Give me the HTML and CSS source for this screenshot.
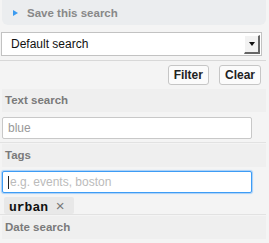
FILE: index.html
```html
<!DOCTYPE html>
<html lang="en">
<head>
    <meta charset="UTF-8">
    <title>Search filters</title>
    <link rel="stylesheet" href="styles.css">
</head>
<body>
    <div class="sidebar">
        <!-- Save search toggle -->
        <div class="save-box">
            <span class="arrow"></span>
            <span class="save-label">Save this search</span>
        </div>

        <!-- Saved search picker -->
        <div class="select">
            <span>Default search</span>
            <span class="select-btn"><span class="select-caret"></span></span>
        </div>

        <div class="rule"></div>

        <div class="actions">
            <button class="btn">Filter</button>
            <button class="btn">Clear</button>
        </div>

        <!-- Text search -->
        <div class="section first">
            <div class="section-head">Text search</div>
            <div class="field">blue</div>
        </div>

        <!-- Tags -->
        <div class="section">
            <div class="section-head">Tags</div>
            <div class="field focused"><span class="cursor"></span>e.g. events, boston</div>
            <div class="tags">
                <span class="tag">urban <span class="tag-x">&times;</span></span>
            </div>
        </div>

        <div class="section">
            <div class="section-head">Date search</div>
        </div>
    </div>
</body>
</html>
```

FILE: styles.css
```css
body {
    margin: 0;
    background: #f3f3f3;
    font-family: "Liberation Sans", Arial, sans-serif;
    font-size: 12px;
    color: #333;
}

.sidebar {
    width: 269px;
    height: 243px;
    overflow: hidden;
    background: #f4f4f4;
}

/* top toggle box */
.save-box {
    height: 25px;
    margin: 0 3px 0 2px;
    background: #ebedef;
    border-radius: 0 0 6px 6px;
    display: flex;
    align-items: center;
    padding-left: 11px;
    box-sizing: border-box;
}

.arrow {
    width: 0;
    height: 0;
    border-top: 3.5px solid transparent;
    border-bottom: 3.5px solid transparent;
    border-left: 5px solid #3b9bf0;
    margin-right: 9px;
}

.save-label {
    font-weight: bold;
    font-size: 11.5px;
    color: #888;
}

/* select */
.select {
    margin: 7px 0 0 1px;
    width: 261px;
    height: 24px;
    box-sizing: border-box;
    background: #fff;
    border: 1px solid #c2c2c2;
    display: flex;
    align-items: center;
    justify-content: space-between;
    padding-left: 9px;
    font-size: 12px;
    color: #111;
}

.select-btn {
    width: 13px;
    height: 16px;
    margin-right: 1px;
    background: #f2f2f2;
    border-top: 1px solid #fff;
    border-left: 1px solid #fff;
    border-right: 2px solid #666;
    border-bottom: 2px solid #666;
    display: flex;
    align-items: center;
    justify-content: center;
}

.select-caret {
    width: 0;
    height: 0;
    border-left: 3.5px solid transparent;
    border-right: 3.5px solid transparent;
    border-top: 4px solid #111;
}

.rule {
    margin-top: 4px;
    width: 266px;
    border-top: 1px solid #d8d8d8;
}

.actions {
    display: flex;
    justify-content: flex-end;
    gap: 10px;
    padding: 4px 8px 2px 0;
}

.btn {
    font-family: "Liberation Sans", Arial, sans-serif;
    font-weight: bold;
    font-size: 12px;
    color: #222;
    background: #fbfbfb;
    border: 1px solid #c6c6c6;
    border-radius: 3px;
    height: 20px;
    padding: 0 5px;
}

/* filter sections */
.section {
    border-top: 1px solid #e2e2e2;
    width: 266px;
}

.section.first {
    border-top-color: transparent;
}

.section-head {
    margin: 1px 0 0 2px;
    height: 23px;
    line-height: 23px;
    padding-left: 3px;
    background: #efefef;
    font-weight: bold;
    font-size: 11.5px;
    color: #7a7a7a;
}

.field {
    margin: 5px 0 3px 2px;
    width: 250px;
    height: 22px;
    box-sizing: border-box;
    background: #fff;
    border: 1px solid #c8c8c8;
    border-radius: 2px;
    padding-left: 5px;
    line-height: 20px;
    font-size: 12px;
    color: #999;
}

.field.focused {
    margin-top: 4px;
    border: 1px solid #3d9cf5;
    box-shadow: 0 0 1px 1px #a8d0f8;
    color: #bbb;
    display: flex;
    align-items: center;
}

.cursor {
    width: 1px;
    height: 13px;
    background: #222;
    margin-right: 1px;
}

.tags {
    padding: 1px 0 0 4px;
    height: 17px;
}

.tag {
    display: inline-block;
    background: #e8e8e8;
    border-radius: 2px;
    padding: 0 9px 0 5px;
    height: 17px;
    line-height: 17px;
    font-family: "Liberation Mono", "Courier New", monospace;
    font-weight: bold;
    font-size: 13px;
    color: #111;
}

.tag-x {
    font-family: "Liberation Sans", Arial, sans-serif;
    font-weight: normal;
    font-size: 15px;
    color: #777;
}
```
